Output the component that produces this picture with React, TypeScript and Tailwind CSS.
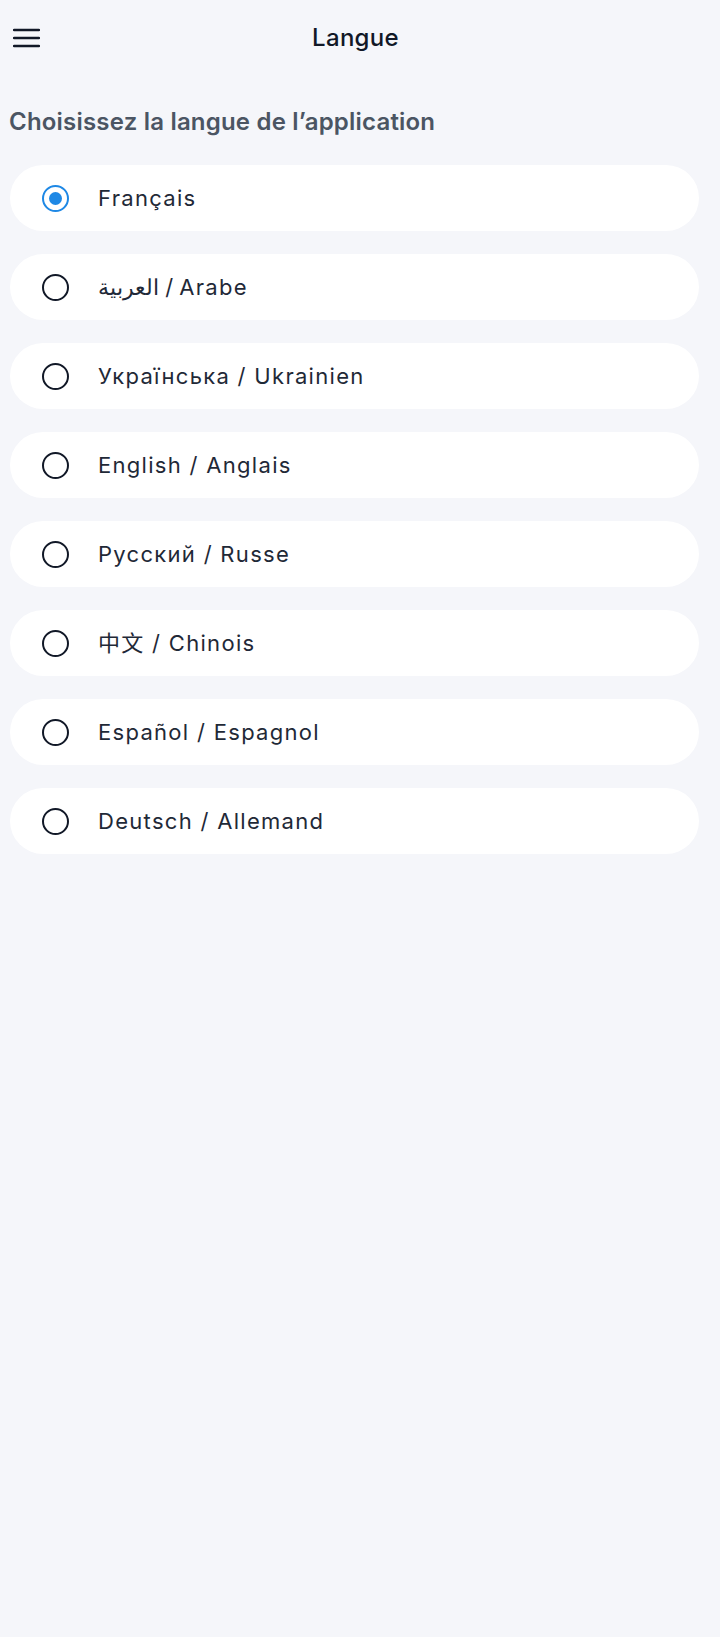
const languages = [
  "Français",
  "العربية / Arabe",
  "Українська / Ukrainien",
  "English / Anglais",
  "Русский / Russe",
  "中文 / Chinois",
  "Español / Espagnol",
  "Deutsch / Allemand",
];

function Radio({ checked }: { checked: boolean }) {
  return checked ? (
    <span className="flex h-[27px] w-[27px] items-center justify-center rounded-full border-[2.5px] border-[#1e88e5]">
      <span className="h-[13px] w-[13px] rounded-full bg-[#1e88e5]" />
    </span>
  ) : (
    <span className="h-[27px] w-[27px] rounded-full border-[2.75px] border-[#111827]" />
  );
}

export default function App() {
  const selected = 0;

  return (
    <div
      className="min-h-[1637px] bg-[#f5f6fa] text-[#1f2937]"
      style={{ fontFamily: "Inter, 'Noto Sans', 'Noto Sans CJK SC', sans-serif" }}
    >
      <header className="relative flex h-[76px] items-center justify-center pr-[9px]">
        <button className="absolute left-[12px] top-[27px] flex h-[22px] w-[28px] items-center justify-center">
          <svg width="27" height="20" viewBox="0 0 27 20" fill="none">
            <path d="M1 2h25M1 10h25M1 18h25" stroke="#111827" strokeWidth="2.4" strokeLinecap="round" />
          </svg>
        </button>
        <h1 className="text-[24px] font-medium tracking-[0.3px] text-[#111827]">Langue</h1>
      </header>

      <h2 className="mt-[31px] px-[9px] text-[24px] font-semibold leading-[30px] tracking-[0.2px] text-[#4b5563]">
        Choisissez la langue de l’application
      </h2>

      <ul className="mt-[28px] flex flex-col gap-[23px] pl-[10px] pr-[21px]">
        {languages.map((label, index) => (
          <li
            key={label}
            className="flex h-[66px] items-center rounded-[33px] bg-white pl-[32px]"
          >
            <Radio checked={index === selected} />
            <span className="ml-[29px] text-[22px] tracking-[1.3px] text-[#1f2937]">
              {label}
            </span>
          </li>
        ))}
      </ul>
    </div>
  );
}
